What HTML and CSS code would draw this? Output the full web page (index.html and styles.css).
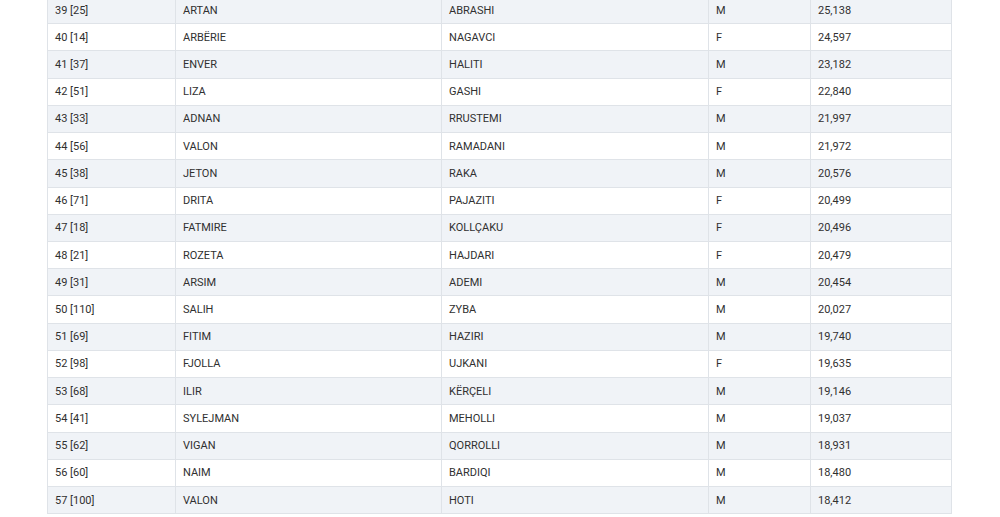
FILE: index.html
```html
<!DOCTYPE html>
<html>
<head>
<meta charset="utf-8">
<link rel="stylesheet" href="styles.css">
</head>
<body>
<div class="wrap">
<table class="tbl">
<colgroup><col class="c1"><col class="c2"><col class="c3"><col class="c4"><col class="c5"></colgroup>
<tbody>
<tr><td>39 [25]</td><td>ARTAN</td><td>ABRASHI</td><td>M</td><td>25,138</td></tr>
<tr><td>40 [14]</td><td>ARBËRIE</td><td>NAGAVCI</td><td>F</td><td>24,597</td></tr>
<tr><td>41 [37]</td><td>ENVER</td><td>HALITI</td><td>M</td><td>23,182</td></tr>
<tr><td>42 [51]</td><td>LIZA</td><td>GASHI</td><td>F</td><td>22,840</td></tr>
<tr><td>43 [33]</td><td>ADNAN</td><td>RRUSTEMI</td><td>M</td><td>21,997</td></tr>
<tr><td>44 [56]</td><td>VALON</td><td>RAMADANI</td><td>M</td><td>21,972</td></tr>
<tr><td>45 [38]</td><td>JETON</td><td>RAKA</td><td>M</td><td>20,576</td></tr>
<tr><td>46 [71]</td><td>DRITA</td><td>PAJAZITI</td><td>F</td><td>20,499</td></tr>
<tr><td>47 [18]</td><td>FATMIRE</td><td>KOLLÇAKU</td><td>F</td><td>20,496</td></tr>
<tr><td>48 [21]</td><td>ROZETA</td><td>HAJDARI</td><td>F</td><td>20,479</td></tr>
<tr><td>49 [31]</td><td>ARSIM</td><td>ADEMI</td><td>M</td><td>20,454</td></tr>
<tr><td>50 [110]</td><td>SALIH</td><td>ZYBA</td><td>M</td><td>20,027</td></tr>
<tr><td>51 [69]</td><td>FITIM</td><td>HAZIRI</td><td>M</td><td>19,740</td></tr>
<tr><td>52 [98]</td><td>FJOLLA</td><td>UJKANI</td><td>F</td><td>19,635</td></tr>
<tr><td>53 [68]</td><td>ILIR</td><td>KËRÇELI</td><td>M</td><td>19,146</td></tr>
<tr><td>54 [41]</td><td>SYLEJMAN</td><td>MEHOLLI</td><td>M</td><td>19,037</td></tr>
<tr><td>55 [62]</td><td>VIGAN</td><td>QORROLLI</td><td>M</td><td>18,931</td></tr>
<tr><td>56 [60]</td><td>NAIM</td><td>BARDIQI</td><td>M</td><td>18,480</td></tr>
<tr><td>57 [100]</td><td>VALON</td><td>HOTI</td><td>M</td><td>18,412</td></tr>
</tbody>
</table>
</div>
</body>
</html>
```

FILE: styles.css
```css
html, body {
  margin: 0;
  padding: 0;
  background: #ffffff;
}
body {
  font-family: Roboto, "Liberation Sans", sans-serif;
  font-size: 11px;
  color: #303030;
  overflow: hidden;
}
.wrap {
  padding-left: 47px;
  margin-top: -4px;
}
.tbl {
  border-collapse: collapse;
  table-layout: fixed;
  width: 904px;
}
.c1 { width: 128px; }
.c2 { width: 266px; }
.c3 { width: 267px; }
.c4 { width: 102px; }
.c5 { width: 141px; }
.tbl td {
  border: 1px solid #dfe3e8;
  height: 27.22px;
  padding: 0 7px;
  box-sizing: border-box;
  vertical-align: middle;
  line-height: 13px;
}
.tbl tr:nth-child(odd) td {
  background: #f0f3f7;
}
```
